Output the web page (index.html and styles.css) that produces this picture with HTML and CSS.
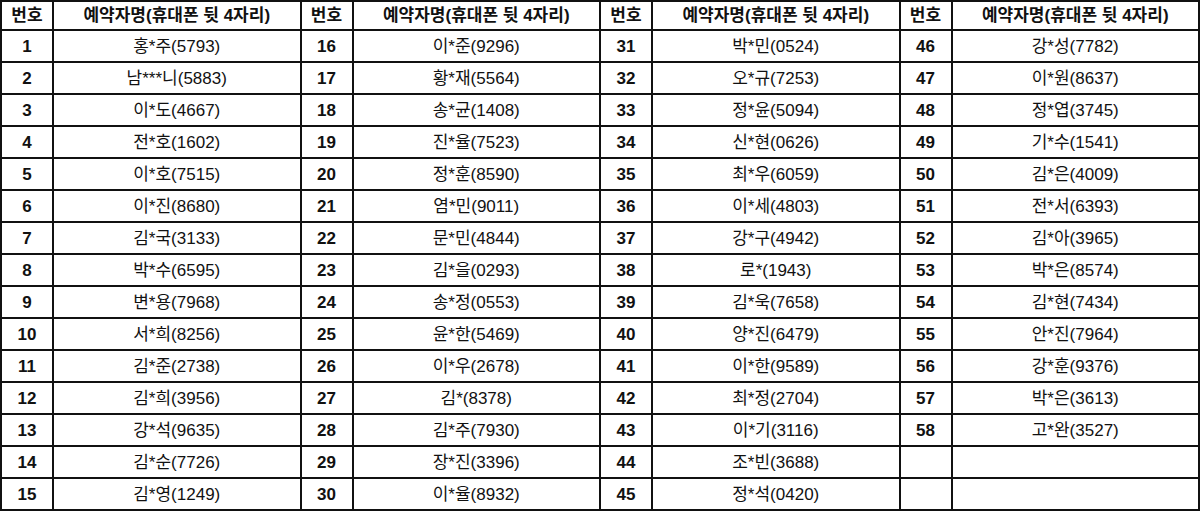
FILE: index.html
```html
<!DOCTYPE html>
<html lang="ko">
<head>
<meta charset="utf-8">
<title>예약자 명단</title>
<link rel="stylesheet" href="styles.css">
</head>
<body>
<table class="list">
<colgroup>
<col class="c-num"><col class="c-name"><col class="c-num"><col class="c-name"><col class="c-num"><col class="c-name"><col class="c-num"><col class="c-name">
</colgroup>
<thead>
<tr><th>번호</th><th>예약자명(휴대폰 뒷 4자리)</th><th>번호</th><th>예약자명(휴대폰 뒷 4자리)</th><th>번호</th><th>예약자명(휴대폰 뒷 4자리)</th><th>번호</th><th>예약자명(휴대폰 뒷 4자리)</th></tr>
</thead>
<tbody>
<tr><td class="num">1</td><td>홍*주(5793)</td><td class="num">16</td><td>이*준(9296)</td><td class="num">31</td><td>박*민(0524)</td><td class="num">46</td><td>강*성(7782)</td></tr>
<tr><td class="num">2</td><td>남***니(5883)</td><td class="num">17</td><td>황*재(5564)</td><td class="num">32</td><td>오*규(7253)</td><td class="num">47</td><td>이*원(8637)</td></tr>
<tr><td class="num">3</td><td>이*도(4667)</td><td class="num">18</td><td>송*균(1408)</td><td class="num">33</td><td>정*윤(5094)</td><td class="num">48</td><td>정*엽(3745)</td></tr>
<tr><td class="num">4</td><td>전*호(1602)</td><td class="num">19</td><td>진*율(7523)</td><td class="num">34</td><td>신*현(0626)</td><td class="num">49</td><td>기*수(1541)</td></tr>
<tr><td class="num">5</td><td>이*호(7515)</td><td class="num">20</td><td>정*훈(8590)</td><td class="num">35</td><td>최*우(6059)</td><td class="num">50</td><td>김*은(4009)</td></tr>
<tr><td class="num">6</td><td>이*진(8680)</td><td class="num">21</td><td>염*민(9011)</td><td class="num">36</td><td>이*세(4803)</td><td class="num">51</td><td>전*서(6393)</td></tr>
<tr><td class="num">7</td><td>김*국(3133)</td><td class="num">22</td><td>문*민(4844)</td><td class="num">37</td><td>강*구(4942)</td><td class="num">52</td><td>김*아(3965)</td></tr>
<tr><td class="num">8</td><td>박*수(6595)</td><td class="num">23</td><td>김*을(0293)</td><td class="num">38</td><td>로*(1943)</td><td class="num">53</td><td>박*은(8574)</td></tr>
<tr><td class="num">9</td><td>변*용(7968)</td><td class="num">24</td><td>송*정(0553)</td><td class="num">39</td><td>김*욱(7658)</td><td class="num">54</td><td>김*현(7434)</td></tr>
<tr><td class="num">10</td><td>서*희(8256)</td><td class="num">25</td><td>윤*한(5469)</td><td class="num">40</td><td>양*진(6479)</td><td class="num">55</td><td>안*진(7964)</td></tr>
<tr><td class="num">11</td><td>김*준(2738)</td><td class="num">26</td><td>이*우(2678)</td><td class="num">41</td><td>이*한(9589)</td><td class="num">56</td><td>강*훈(9376)</td></tr>
<tr><td class="num">12</td><td>김*희(3956)</td><td class="num">27</td><td>김*(8378)</td><td class="num">42</td><td>최*정(2704)</td><td class="num">57</td><td>박*은(3613)</td></tr>
<tr><td class="num">13</td><td>강*석(9635)</td><td class="num">28</td><td>김*주(7930)</td><td class="num">43</td><td>이*기(3116)</td><td class="num">58</td><td>고*완(3527)</td></tr>
<tr><td class="num">14</td><td>김*순(7726)</td><td class="num">29</td><td>장*진(3396)</td><td class="num">44</td><td>조*빈(3688)</td><td class="num"></td><td></td></tr>
<tr><td class="num">15</td><td>김*영(1249)</td><td class="num">30</td><td>이*율(8932)</td><td class="num">45</td><td>정*석(0420)</td><td class="num"></td><td></td></tr>
</tbody>
</table>
</body>
</html>
```

FILE: styles.css
```css
html, body {
  margin: 0;
  padding: 0;
  background: #ffffff;
}

body {
  font-family: "Liberation Sans", "Noto Sans CJK KR", sans-serif;
  color: #111111;
}

.list {
  border-collapse: collapse;
  table-layout: fixed;
  width: 1198px;
  margin: 0;
}

.c-num { width: 52px; }
.c-name { width: 247.5px; }

.list th,
.list td {
  border: 2px solid #111111;
  padding: 0;
  text-align: center;
  vertical-align: middle;
  font-size: 17px;
  line-height: 19px;
  white-space: nowrap;
}

.list thead tr { height: 29px; }
.list tbody tr { height: 32px; }

.list th {
  font-weight: bold;
}

.list td {
  font-weight: normal;
}

.list td.num {
  font-weight: bold;
}
```
